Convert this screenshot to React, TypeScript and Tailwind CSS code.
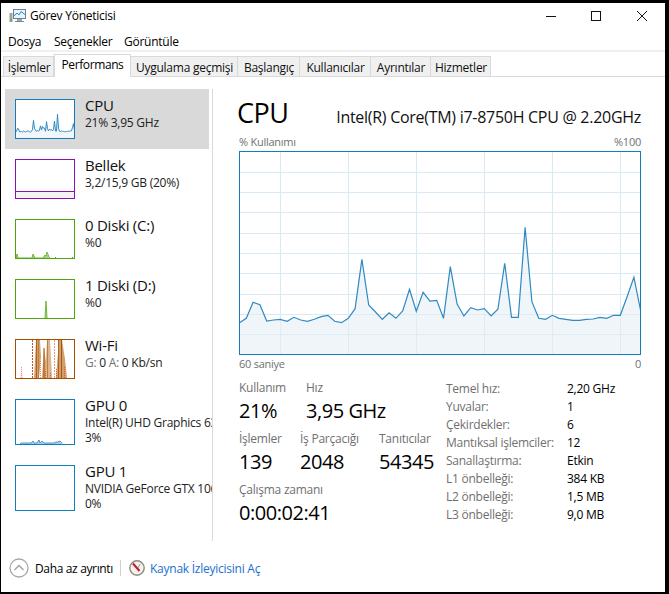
import React from "react";

const zy = [338,325,277,284,333,330,328,334,322,330,334,328,320,316,334,338,325,296,148,285,306,328,308,325,303,238,304,247,273,271,325,170,282,318,293,300,296,318,298,160,322,322,52,275,325,328,316,325,328,331,331,328,327,322,325,316,316,260,202,303];
const mainY = zy.map((v) => v / 3 + 210);

function mainChart() {
  const pts = mainY.map((y, i) => `${(i * 6.8 + 0.5).toFixed(1)},${(y - 151).toFixed(1)}`).join(" ");
  return { line: pts, area: `0.5,203 ${pts} 401.5,203` };
}

function thumbCpu() {
  const pts = mainY.map((y, i) => `${i + 0.5},${(((y - 151) / 203) * 38 + 1).toFixed(1)}`).join(" ");
  return { line: pts, area: `1,39 ${pts} 59,39` };
}

function Thumb({ color, h = 40, children }: { color: string; h?: number; children?: React.ReactNode }) {
  return (
    <svg width="60" height={h} viewBox={`0 0 60 ${h}`} className="block shrink-0">
      <rect x="0" y="0" width="60" height={h} fill="#fff" />
      {children}
      <rect x="0.5" y="0.5" width="59" height={h - 1} fill="none" stroke={color} strokeWidth="1" />
    </svg>
  );
}

function CpuT() {
  const t = thumbCpu();
  return (
    <Thumb color="#117dbb">
      <polygon points={t.area} fill="#f1f6fa" />
      <polyline points={t.line} fill="none" stroke="#2f8ac2" strokeWidth="1" />
    </Thumb>
  );
}

function MemT() {
  return (
    <Thumb color="#8b12ae">
      <rect x="1" y="32" width="58" height="7" fill="#f4f2f4" />
      <line x1="0" y1="32.5" x2="60" y2="32.5" stroke="#8b12ae" />
    </Thumb>
  );
}

function Disk0T() {
  return (
    <Thumb color="#4da60c">
      <polygon points="1,39 2,35 3,39 17,39 18,35 20,39 28,39 30,36 31,37 32,34 34,39 40,39 59,39" fill="#a6d283" />
      <polyline points="1,39 2,35 3,39 17,39 18,35 20,39 28,39 30,36 31,37 32,33 34,38 35,39" fill="none" stroke="#6fb83a" strokeWidth="1" />
      <rect x="40" y="38" width="1" height="1" fill="#4da60c" />
      <rect x="57" y="38" width="1" height="1" fill="#4da60c" />
    </Thumb>
  );
}

function Disk1T() {
  return (
    <Thumb color="#4da60c">
      <polygon points="30,39 31,22 32,39" fill="#a6d283" />
      <polyline points="30,39 31,22 32,39" fill="none" stroke="#6fb83a" strokeWidth="1" />
    </Thumb>
  );
}

function WifiT() {
  return (
    <Thumb color="#a74f01">
      <polygon points="5,39 6.5,27 8,39" fill="#fbe3d8" />
      <line x1="6.5" y1="39" x2="6.5" y2="27" stroke="#eb9a7c" strokeDasharray="1 1" />
      <polygon points="19,39 21,1 25,1 26,18 24,39" fill="#d39f6e" />
      <polygon points="27,39 29,8 33,39" fill="#d39f6e" />
      <polygon points="30,39 32,1 35,1 37,39" fill="#dcb48e" />
      <polygon points="41,39 44,1 47,1 50,20 52,39" fill="#d39f6e" />
      <line x1="17.5" y1="39" x2="17.5" y2="1" stroke="#c8561c" strokeDasharray="2 1" />
      <line x1="21.5" y1="39" x2="21.5" y2="1" stroke="#ac6220" />
      <line x1="23.5" y1="39" x2="23.5" y2="1" stroke="#bd7d3f" />
      <line x1="29" y1="39" x2="29" y2="9" stroke="#a3560f" />
      <line x1="32.5" y1="39" x2="32.5" y2="1" stroke="#bd7d3f" />
      <line x1="39.5" y1="39" x2="39.5" y2="1" stroke="#eb9a7c" strokeDasharray="2 1" />
      <line x1="43.5" y1="39" x2="43.5" y2="1" stroke="#ac6220" />
      <line x1="46.5" y1="39" x2="46.5" y2="1" stroke="#a3560f" />
      <line x1="25.5" y1="39" x2="25.5" y2="22" stroke="#e08a5c" strokeDasharray="1 1" />
      <line x1="30.5" y1="39" x2="30.5" y2="32" stroke="#d0642c" strokeDasharray="1 1" />
      <line x1="35.5" y1="39" x2="35.5" y2="33" stroke="#d0642c" strokeDasharray="1 1" />
      <line x1="41.5" y1="39" x2="41.5" y2="30" stroke="#d0642c" strokeDasharray="1 1" />
      <line x1="49.5" y1="39" x2="49.5" y2="28" stroke="#d0642c" strokeDasharray="1 1" />
    </Thumb>
  );
}

function Gpu0T() {
  return (
    <Thumb color="#117dbb" h={46}>
      <polygon points="5,45 6,44 16,44 18,42 19,44 22,44 24,41 25,44 27,42 29,44 32,44 36,44 39,44 41,43 43,43 45,42 47,44 48,45" fill="#a9d0e8" />
      <polyline points="5,45 6,44 16,44 18,42 19,44 22,44 24,41 25,44 27,42 29,44 32,44 36,44 39,44 41,43 43,43 45,42 47,44" fill="none" stroke="#4c9bcb" strokeWidth="1" />
    </Thumb>
  );
}

function Gpu1T() {
  return <Thumb color="#117dbb" h={46} />;
}

function SideItem({
  thumb,
  title,
  lines,
  selected,
  tall,
}: {
  thumb: React.ReactNode;
  title: string;
  lines: React.ReactNode[];
  selected?: boolean;
  tall?: boolean;
}) {
  return (
    <div className={`${tall ? "h-[66px]" : "h-[60px]"} ml-[4px] flex items-start pl-[10px] pt-[10px] overflow-hidden ${selected ? "w-[204px] bg-[#d9d9d9]" : "w-[207px]"}`}>
      {thumb}
      <div className="ml-[10px] flex-1 min-w-0 -mt-[4px] whitespace-nowrap overflow-hidden">
        <div className="text-[15px] leading-[20px] text-[#111]">{title}</div>
        {lines.map((l, i) => (
          <div key={i} className="text-[12px] leading-[15px] text-[#222]">
            {l}
          </div>
        ))}
      </div>
    </div>
  );
}

function Tab({ label, w, active }: { label: string; w: number; active?: boolean }) {
  return (
    <div
      style={{ width: w }}
      className={
        active
          ? "h-[23px] border border-b-0 border-[#d9d9d9] bg-white text-[12px] leading-[20px] text-center text-black relative z-10 -mb-px tracking-[-0.4px]"
          : "h-[21px] mt-[2px] pl-[1px] border border-l-0 border-[#d9d9d9] bg-[#f0f0f0] text-[12px] leading-[22px] text-center text-[#111] whitespace-nowrap"
      }
    >
      {label}
    </div>
  );
}

function Stat({ label, value, w }: { label: string; value: string; w: number }) {
  return (
    <div style={{ width: w }} className="shrink-0 whitespace-nowrap">
      <div className="text-[12px] leading-[16px] text-[#707070]">{label}</div>
      <div className="text-[20px] leading-[28px] mt-[1px] text-black tracking-[-0.45px]">{value}</div>
    </div>
  );
}

const specs: [string, string][] = [
  ["Temel hız:", "2,20 GHz"],
  ["Yuvalar:", "1"],
  ["Çekirdekler:", "6"],
  ["Mantıksal işlemciler:", "12"],
  ["Sanallaştırma:", "Etkin"],
  ["L1 önbelleği:", "384 KB"],
  ["L2 önbelleği:", "1,5 MB"],
  ["L3 önbelleği:", "9,0 MB"],
];

function MainGraph() {
  const c = mainChart();
  const vs = [41, 109, 177, 245, 313, 381];
  const hs = [21, 41, 61, 82, 102, 122, 143, 163, 183];
  return (
    <svg width="402" height="204" viewBox="0 0 402 204" className="block">
      <rect width="402" height="204" fill="#fff" />
      {vs.map((x) => (
        <line key={x} x1={x + 0.5} y1="0" x2={x + 0.5} y2="204" stroke="#d9eaf4" />
      ))}
      {hs.map((y) => (
        <line key={y} x1="0" y1={y + 0.5} x2="402" y2={y + 0.5} stroke="#d9eaf4" />
      ))}
      <polygon points={c.area} fill="#e4edf5" fillOpacity="0.55" />
      <polyline points={c.line} fill="none" stroke="#2f8ac2" strokeWidth="1.2" />
      <rect x="0.5" y="0.5" width="401" height="203" fill="none" stroke="#117dbb" />
    </svg>
  );
}

export default function App() {
  return (
    <div
      className="w-[669px] h-[594px] bg-black pt-[3px] pl-[1px] pr-[4px] pb-[2px] overflow-hidden tracking-[-0.25px]"
      style={{ fontFamily: '"Open Sans","Noto Sans",sans-serif' }}
    >
      <div className="w-full h-full bg-white flex flex-col">
        {/* title bar */}
        <div className="h-[26px] flex items-center shrink-0">
          <svg width="18" height="16" viewBox="0 0 18 16" className="ml-[8px] mr-[2px]">
            <rect x="4.5" y="1.5" width="12" height="9" fill="#e8f4fb" stroke="#6f8291" />
            <polyline points="5,8 8,5 10,7 12,3.5 16,6.5" fill="none" stroke="#2f8ac2" />
            <rect x="0.5" y="5" width="3" height="9" fill="#9aa69a" />
            <rect x="1" y="11" width="2" height="2" fill="#63b04a" />
            <rect x="8" y="11" width="5" height="2" fill="#9aa6ad" />
            <rect x="6" y="13" width="9" height="1" fill="#7d8a92" />
          </svg>
          <span className="ml-[1px] text-[12px] text-black">Görev Yöneticisi</span>
          <div className="ml-auto flex items-center">
            <svg width="12" height="12" viewBox="0 0 12 12" className="mr-[33px]"><line x1="1" y1="6.5" x2="11" y2="6.5" stroke="#111" /></svg>
            <svg width="12" height="12" viewBox="0 0 12 12" className="mr-[34px]"><rect x="1.5" y="1.5" width="9" height="9" fill="none" stroke="#111" /></svg>
            <svg width="12" height="12" viewBox="0 0 12 12" className="mr-[17px]"><path d="M1 1L11 11M11 1L1 11" stroke="#111" /></svg>
          </div>
        </div>
        {/* menu */}
        <div className="h-[21px] flex items-center pl-[7px] pt-[5px] text-[12px] text-black shrink-0">
          <span className="w-[46px]">Dosya</span>
          <span className="w-[70px]">Seçenekler</span>
          <span>Görüntüle</span>
        </div>
        <div className="h-[2px] bg-[#f0f0f0] shrink-0" />
        {/* tabs */}
        <div className="flex items-start pl-[2px] pt-[2px] border-b border-[#d9d9d9] h-[25px] shrink-0">
          <div className="border-l border-[#d9d9d9] h-[21px] mt-[2px]" />
          <Tab label="İşlemler" w={50} />
          <Tab label="Performans" w={77} active />
          <Tab label="Uygulama geçmişi" w={107} />
          <Tab label="Başlangıç" w={62} />
          <Tab label="Kullanıcılar" w={71} />
          <Tab label="Ayrıntılar" w={60} />
          <Tab label="Hizmetler" w={60} />
        </div>
        {/* main */}
        <div className="flex flex-1 min-h-0">
          <div className="w-[212px] shrink-0 pt-[12px]">
            <div className="h-[452px] border-r border-[#d9d9d9]">
              <SideItem thumb={<CpuT />} title="CPU" lines={["21%  3,95 GHz"]} selected />
              <SideItem thumb={<MemT />} title="Bellek" lines={["3,2/15,9 GB (20%)"]} />
              <SideItem thumb={<Disk0T />} title="0 Diski (C:)" lines={["%0"]} />
              <SideItem thumb={<Disk1T />} title="1 Diski (D:)" lines={["%0"]} />
              <SideItem
                thumb={<WifiT />}
                title="Wi-Fi"
                lines={[
                  <span>
                    <span className="text-[#707070]">G:</span> 0 <span className="text-[#707070]">A:</span> 0 Kb/sn
                  </span>,
                ]}
              />
              <SideItem thumb={<Gpu0T />} title="GPU 0" lines={["Intel(R) UHD Graphics 630", "3%"]} tall />
              <SideItem thumb={<Gpu1T />} title="GPU 1" lines={["NVIDIA GeForce GTX 1060", "0%"]} tall />
            </div>
          </div>
          <div className="flex-1 pl-[26px] pt-[19px] min-w-0">
            <div className="w-[402px] flex items-end justify-between h-[34px]">
              <span className="text-[27px] leading-[34px] text-black -ml-[2px] tracking-[-0.5px]">CPU</span>
              <span className="text-[16px] leading-[20px] mb-[3px] text-[#111] tracking-[-0.28px]">Intel(R) Core(TM) i7-8750H CPU @ 2.20GHz</span>
            </div>
            <div className="w-[402px] flex justify-between text-[11px] leading-[14px] text-[#707070] mt-[5px] mb-[2px]">
              <span>% Kullanımı</span>
              <span>%100</span>
            </div>
            <MainGraph />
            <div className="w-[402px] flex justify-between text-[11px] leading-[14px] text-[#707070] mt-[2px]">
              <span>60 saniye</span>
              <span>0</span>
            </div>
            <div className="flex mt-[9px]">
              <div className="w-[207px] shrink-0 flex flex-col gap-[6px]">
                <div className="flex">
                  <Stat label="Kullanım" value="21%" w={67} />
                  <Stat label="Hız" value="3,95 GHz" w={120} />
                </div>
                <div className="flex">
                  <Stat label="İşlemler" value="139" w={61} />
                  <Stat label="İş Parçacığı" value="2048" w={79} />
                  <Stat label="Tanıtıcılar" value="54345" w={60} />
                </div>
                <div className="flex">
                  <Stat label="Çalışma zamanı" value="0:00:02:41" w={150} />
                </div>
              </div>
              <div className="flex-1 flex flex-col">
                {specs.map(([k, v]) => (
                  <div key={k} className="flex h-[18px] items-center text-[12px] whitespace-nowrap">
                    <span className="w-[121px] text-[#707070]">{k}</span>
                    <span className="text-black">{v}</span>
                  </div>
                ))}
              </div>
            </div>
          </div>
        </div>
        {/* footer */}
        <div className="h-[52px] shrink-0 flex items-center pl-[8px] pt-[4px]">
          <svg width="20" height="20" viewBox="0 0 20 20" className="shrink-0">
            <circle cx="10" cy="10" r="9" fill="#fff" stroke="#a8a8a8" strokeWidth="1.3" />
            <polyline points="5.5,12 10,7.5 14.5,12" fill="none" stroke="#a0a0a0" strokeWidth="1.4" />
          </svg>
          <span className="ml-[6px] mt-[1px] text-[12px] text-black w-[85px] tracking-[-0.35px]">Daha az ayrıntı</span>
          <div className="w-px h-[16px] bg-[#d0d0d0]" />
          <svg width="16" height="16" viewBox="0 0 16 16" className="ml-[8px] shrink-0">
            <circle cx="8" cy="8" r="7.2" fill="#f4f2ec" stroke="#8c8c84" strokeWidth="1.4" />
            <path d="M4 3.5L10.5 11" stroke="#c5182a" strokeWidth="2" />
            <path d="M11 4L9 8" stroke="#9a9a90" strokeWidth="1" />
          </svg>
          <span className="ml-[5px] mt-[1px] text-[12px] text-[#1a6fd0]">Kaynak İzleyicisini Aç</span>
        </div>
      </div>
    </div>
  );
}
